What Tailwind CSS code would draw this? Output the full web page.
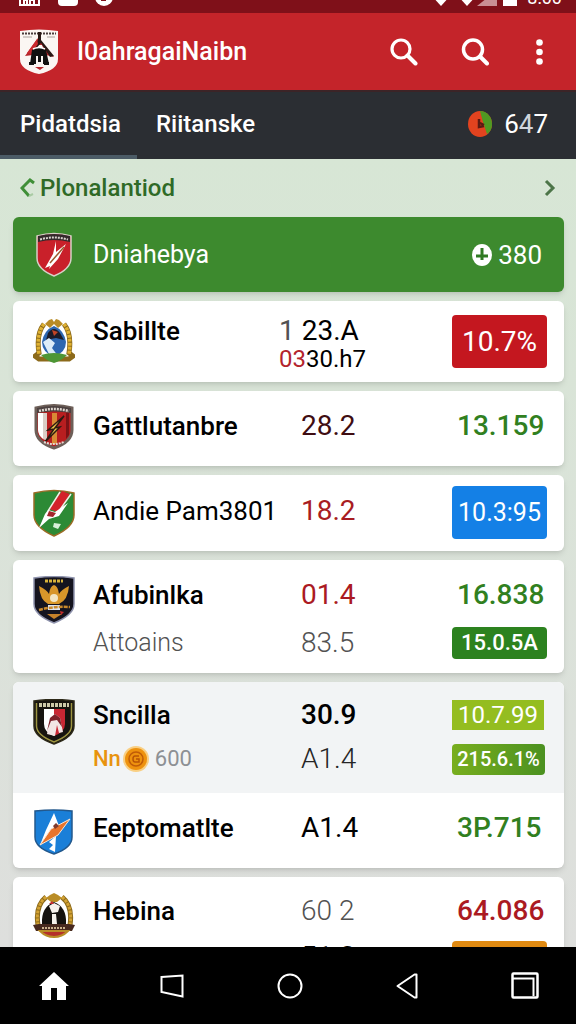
<!DOCTYPE html>
<html lang="id">
<head>
    <meta charset="UTF-8">
    <meta name="viewport" content="width=device-width, initial-scale=1.0">
    <title>I0ahragaiNaibn</title>
    <script src="https://cdn.jsdelivr.net/npm/@tailwindcss/browser@4"></script>
</head>
<body class="h-screen flex flex-col overflow-hidden bg-[#dce3da] font-['Roboto','Liberation_Sans',sans-serif] text-black">

    <!-- status bar -->
    <div class="flex items-end justify-between h-[13px] shrink-0 pl-[18px] pr-[14px] pb-[7px] bg-[#7f1019] text-white overflow-hidden">
        <div class="flex gap-[17px]">
            <svg class="w-[23px] h-[22px]" viewBox="0 0 23 22"><path d="M2 0v21h19V0M6 20v-4h3v4m3 0v-4h4v4" fill="none" stroke="#fff" stroke-width="2"/></svg>
            <svg class="w-[20px] h-[22px]" viewBox="0 0 20 22"><rect width="20" height="22" rx="4" fill="#fff"/></svg>
            <svg class="w-[18px] h-[22px]" viewBox="0 0 18 22"><circle cx="9" cy="13" r="9" fill="#fff"/><path d="M6 16h5" stroke="#7f1019" stroke-width="2"/></svg>
        </div>
        <div class="flex items-end gap-[6px]">
            <svg class="w-[20px] h-[16px]" viewBox="0 0 20 16"><path d="M0 5h20L10 16z" fill="#fff"/></svg>
            <svg class="w-[20px] h-[16px]" viewBox="0 0 20 16"><path d="M0 5h20L10 16z" fill="#fff"/></svg>
            <svg class="-ml-[6px] w-[20px] h-[16px]" viewBox="0 0 20 16"><path d="M0 16L20 0v16z" fill="#c98f94"/></svg>
            <svg class="w-[14px] h-[20px]" viewBox="0 0 14 20"><path d="M0 0h14v20H0z" fill="#fff"/></svg>
            <span class="ml-1 -mb-[2px] text-[18px] leading-5">8:00</span>
        </div>
    </div>

    <!-- app bar -->
    <header class="flex items-center h-[77px] shrink-0 pl-5 pr-8 bg-[#c4242a] text-white">
        <svg class="w-[38px] h-[45px]" viewBox="0 0 38 45">
            <path d="M0 2Q19-1 38 2v28q0 11-19 15Q0 41 0 30z" fill="#fbf6f3"/>
            <path d="M2 4.500h34" stroke="#4a3d3d" stroke-width="2" stroke-dasharray="2 1"/>
            <path d="M3 8h9m15 0h8" stroke="#a9a09c"/>
            <path d="M18 9L5 27l8-1 4-10h5l4 10 8 2z" fill="#b5252b"/>
            <path d="M18 3h3v8l13 16-4 1-9-14-9 10-3-2 9-11z" fill="#2a1815"/>
            <path d="M7 24l10-14 1 5-7 10z" fill="#c9292e"/>
            <path d="M12 21q7-4 14 0l3 14h-6v-8h-7v8h-6z" fill="#111"/>
            <path d="M9 33h5v3H9zm15 0h5v3h-5z" fill="#111"/>
            <path d="M18 25h3v8h-3z" fill="#111"/>
            <path d="M13 20q6-3 12 0" fill="none" stroke="#fff" stroke-width="1.500"/>
            <path d="M15 38h9l-4 3z" fill="#b5252b"/>
        </svg>
        <h1 class="ml-[19px] flex-1 text-[25px] leading-8 font-medium">I0ahragaiNaibn</h1>
        <button class="mr-[43px]" aria-label="Cari">
            <svg class="w-7 h-7" viewBox="0 0 28 28"><circle cx="11" cy="11" r="9" fill="none" stroke="#fff" stroke-width="3.200"/><path d="M17.500 17.500l8 8" stroke="#fff" stroke-width="4" stroke-linecap="round"/></svg>
        </button>
        <button class="mr-[46px]" aria-label="Cari tim">
            <svg class="w-7 h-7" viewBox="0 0 28 28"><circle cx="12" cy="11.500" r="9.500" fill="none" stroke="#fff" stroke-width="3.500"/><path d="M19 18.500l7 7" stroke="#fff" stroke-width="4" stroke-linecap="round"/></svg>
        </button>
        <button class="w-[9px]" aria-label="Menu">
            <svg class="w-[9px] h-[26px]" viewBox="0 0 9 26" fill="#fff"><circle cx="4.500" cy="3.500" r="3.300"/><circle cx="4.500" cy="13" r="3.300"/><circle cx="4.500" cy="22.500" r="3.300"/></svg>
        </button>
    </header>

    <!-- tabs -->
    <nav class="flex h-[69px] shrink-0 border-t-2 border-[#3b2427] bg-[#2b2e33] text-white text-[24px] leading-8 font-medium">
        <a href="#" class="flex w-[137px] items-center pl-5 border-b-4 border-[#4c5c67]">Pidatdsia</a>
        <a href="#" class="flex items-center pl-[19px] pb-1">Riitanske</a>
        <div class="ml-auto flex items-center gap-3 pr-7 pb-1 text-[26px] font-normal">
            <svg class="w-6 h-[26px]" viewBox="0 0 24 26"><ellipse cx="12" cy="13" rx="12" ry="13" fill="#e2431f"/><path d="M12 0c7 0 12 6 12 13 0 5-2 8-5 10l-4-12z" fill="#4f9a22"/><path d="M11 8v8l5-1M12 12l4 2" fill="none" stroke="#5c1a12" stroke-width="2.500"/></svg>
            <span>6<span class="text-gray-300">4</span>7</span>
        </div>
    </nav>

    <main class="flex-1 min-h-0 overflow-hidden pl-[13px] pr-3 bg-linear-to-b from-[#d7e6d5] to-[#dedfdd]">
        <div class="flex items-center justify-between h-[58px] pl-[7px] pr-2 text-[#2f6a27]">
            <a href="#" class="flex items-center gap-[5px] text-[24px] leading-8 font-medium">
                <svg class="w-[15px] h-5" viewBox="0 0 15 20" fill="none"><path d="M14 5L10 2 2 10l7 8" stroke="#3f8f37" stroke-width="3"/><path d="M9 18l4-2" stroke="#a9cba4" stroke-width="2"/></svg>
                Plonalantiod
            </a>
            <button aria-label="Berikutnya">
                <svg class="w-3 h-[18px]" viewBox="0 0 12 18"><path d="M2 2l7 7-7 7" fill="none" stroke="#4c7548" stroke-width="3"/></svg>
            </button>
        </div>

        <ul class="flex flex-col gap-[9px] text-[26px] leading-8">

            <li class="grid grid-cols-[42px_1fr_auto] items-center gap-x-[18px] h-[75px] pl-5 pr-[22px] rounded-md bg-[#3d8a2e] text-white shadow-md">
                <svg class="w-[42px] h-[46px]" viewBox="0 0 42 46">
                    <path d="M4 4Q21-1 38 4v22q0 11-17 18Q4 37 4 26z" fill="#c9202a" stroke="#d8d0c8" stroke-width="1.500"/>
                    <path d="M5 4Q21 0 37 4v6Q21 6 5 10z" fill="#33292b"/>
                    <path d="M7 7.500Q21 3.500 35 7.500" fill="none" stroke="#d9d4cf" stroke-width="2" stroke-dasharray="2 1"/>
                    <path d="M23 9l-3 13-8 14 5-2-1 3 9-10 8-15-10 8z" fill="#fff"/>
                    <path d="M31 15L17 31" stroke="#9b5a2d" stroke-width="1.500"/>
                </svg>
                <span class="text-[25px]">Dniahebya</span>
                <span class="flex items-center gap-[6px]">
                    <svg class="w-5 h-[22px]" viewBox="0 0 20 22"><ellipse cx="10" cy="11" rx="10" ry="11" fill="#fff"/><path d="M10 4v12M4 12h12" stroke="#2f7a22" stroke-width="3"/></svg>
                    380
                </span>
            </li>

            <li class="grid grid-cols-[42px_1fr_133px_95px] items-start gap-x-[18px] pt-[14px] pb-[11px] pl-5 pr-[17px] rounded-md bg-white shadow-md">
                <svg class="mt-[3px] w-[42px] h-[46px]" viewBox="0 0 42 46">
                    <path d="M11 6Q3 16 6 35l-4 3 4 3h30l4-3-4-3q3-19-5-29" fill="none" stroke="#8c6a1b" stroke-width="5"/>
                    <path d="M11 6Q3 16 6 36M31 6q8 10 5 30" fill="none" stroke="#e0b233" stroke-width="3.500" stroke-dasharray="3 1"/>
                    <path d="M12 6l4-4 3-1 2 3 2-3 3 1 4 4-5 4-4-4-4 4z" fill="#b98c26"/>
                    <path d="M21 8q-10 4-12 16 0 10 12 15 12-5 12-15Q31 12 21 8z" fill="#2c66b0"/>
                    <path d="M15 15q6-8 12 0l4 7-8-2-10 2z" fill="#1c1c2a"/>
                    <path d="M19 12l6 2-4 4z" fill="#c24527"/>
                    <path d="M10 24l6-4 6 5-3 5 6 8h-8z" fill="#dcecf8"/>
                    <path d="M8 37q13-4 26 0-6 6-13 8-7-2-13-8z" fill="#4d9635"/>
                </svg>
                <span class="font-medium">Sabillte</span>
                <div class="-ml-[22px]">
                    <div class="text-[28px] leading-8"><span class="text-neutral-600">1</span> 23.A</div>
                    <div class="text-[24px] leading-6"><span class="text-[#b3242c]">03</span>30.h7</div>
                </div>
                <span class="h-[53px] flex items-center justify-center rounded-sm bg-[#c4171f] text-[28px] text-white">10.7%</span>
            </li>

            <li class="grid grid-cols-[42px_1fr_133px_95px] items-start gap-x-[18px] pt-[13px] pb-4 pl-5 pr-[17px] rounded-md bg-white leading-[44px] shadow-md">
                <svg class="w-[42px] h-[46px]" viewBox="0 0 42 46">
                    <path d="M3 4Q21-1 39 4v22q0 12-18 18Q3 38 3 26z" fill="#b81e20" stroke="#6d5f58" stroke-width="3"/>
                    <path d="M5 9h5v26q-5-4-5-9z" fill="#fff"/>
                    <path d="M10 9h4v28l-4-2z" fill="#d9cdc6"/>
                    <path d="M19 9h5v31h-5z" fill="#d98a35"/>
                    <path d="M33 9h3v22l-3 4z" fill="#7b1216"/>
                    <path d="M4 4Q21 0 38 4v5Q21 6 4 9z" fill="#4c4140"/>
                    <path d="M6 7q15-4 30 0" fill="none" stroke="#ddd5ce" stroke-width="2.500" stroke-dasharray="2 1"/>
                    <path d="M31 12L15 26l6-1-9 13 15-15-5 1z" fill="#e9c14a" stroke="#2b1a12" stroke-width="1.500"/>
                    <path d="M11 38q10 4 20 0" fill="none" stroke="#e2d8d2" stroke-width="2" stroke-dasharray="2 1"/>
                </svg>
                <span class="font-medium">Gattlutanbre</span>
                <span class="text-[28px] text-[#3f0d12]">28.2</span>
                <span class="pl-[5px] text-[28px] text-[#31801f] font-medium">13.159</span>
            </li>

            <li class="grid grid-cols-[42px_1fr_133px_95px] items-start gap-x-[18px] pt-[11px] pb-3 pl-5 pr-[17px] rounded-md bg-white leading-[50px] shadow-md">
                <svg class="mt-[3px] w-[42px] h-12" viewBox="0 0 42 48">
                    <path d="M1 4Q21-1 41 4v22q0 12-20 21Q1 38 1 26z" fill="#2c8a35" stroke="#9a6b25" stroke-width="1.500"/>
                    <path d="M29 2l8 3-12 18-9-3z" fill="#d3222a"/>
                    <path d="M27 3L15 22m23-17L26 22" stroke="#f5efe8" stroke-width="1.500"/>
                    <path d="M15 21l7 2 13-9-9 13-10 3-10 9 6-14z" fill="#fff"/>
                    <path d="M16 22l7 2-3 4-6-1z" fill="#a3252b"/>
                    <path d="M21 34l7 1-3 5-5-2z" fill="#d8efd9"/>
                </svg>
                <span class="whitespace-nowrap">Andie Pam3801</span>
                <span class="text-[28px] text-[#a81c22]">18.2</span>
                <span class="h-[53px] flex items-center justify-center rounded-sm bg-[#1480e6] text-[25px] text-white">10.3:95</span>
            </li>

            <li class="grid grid-cols-[42px_1fr_133px_95px] items-center gap-x-[18px] gap-y-1 pt-[13px] pb-2 pl-5 pr-[17px] rounded-md bg-white leading-[44px] shadow-md">
                <svg class="row-span-2 self-start mt-[3px] w-[42px] h-12" viewBox="0 0 42 48">
                    <path d="M1 2q20-3 40 0v26q0 11-20 19Q1 39 1 28z" fill="#15141f" stroke="#8f93ad" stroke-width="1.500"/>
                    <path d="M12 5h18" stroke="#d8b23a" stroke-width="3" stroke-dasharray="3 1"/>
                    <path d="M6 10q8 4 10 8 1-8 5-9 4 1 5 9 2-4 10-8-1 14-10 18H15Q7 24 6 10z" fill="#d8962a"/>
                    <circle cx="21" cy="22" r="4" fill="#f3e6c4"/>
                    <path d="M15 29h12v5H15z" fill="#dfe4ef"/>
                    <path d="M6 34q15-4 31-3" fill="none" stroke="#c9892c" stroke-width="2.500" stroke-dasharray="4 1"/>
                    <path d="M14 38h15l-8 5z" fill="#c5812a"/>
                    <path d="M27 35l4 1-3 3z" fill="#c42c2c"/>
                </svg>
                <span class="font-medium">Afubinlka</span>
                <span class="text-[28px] text-[#ab1a22]">01.4</span>
                <span class="pl-[5px] text-[28px] text-[#31801f] font-medium">16.838</span>
                <span class="text-[25px] text-neutral-600 font-light">Attoains</span>
                <span class="text-[28px] text-neutral-600 font-light">83.5</span>
                <span class="h-8 flex items-center justify-center rounded-sm bg-[#2c821f] text-[22px] text-white font-medium">15.0.5A</span>
            </li>

            <li class="rounded-md bg-white leading-[44px] shadow-md overflow-hidden">
                <div class="grid grid-cols-[42px_1fr_133px_95px] items-center gap-x-[18px] pt-[11px] pb-3 pl-5 pr-[17px] bg-[#f2f4f5]">
                    <svg class="row-span-2 self-start mt-[6px] w-[42px] h-[46px]" viewBox="0 0 42 46">
                        <path d="M1 2q20-3 40 0v25q0 11-20 18Q1 38 1 27z" fill="#17140f" stroke="#2d2918" stroke-width="1.500"/>
                        <path d="M3.500 4v23q0 9 17.500 16 17.500-7 17.500-16V4" fill="none" stroke="#9c9440" stroke-width="1.500"/>
                        <path d="M6 6h30" stroke="#cdc9a8" stroke-width="4" stroke-dasharray="3 1"/>
                        <path d="M11 10h10v27q-10-4-10-12z" fill="#fff"/>
                        <path d="M21 10h11v15q0 8-11 12z" fill="#c82733"/>
                        <path d="M14 35l3-16 5-4 5 4 3 14-4 1-2-8-2 11z" fill="#f2e6e4"/>
                        <path d="M17 19l5-4 5 4 2 9-5-7-6 1-4 10z" fill="#7d222a"/>
                    </svg>
                    <span class="font-medium">Sncilla</span>
                    <span class="text-[28px] font-medium">30.9</span>
                    <span class="w-[92px] h-[30px] flex items-center justify-center bg-[#94bd20] text-[24px] text-white">10.7.99</span>
                    <span class="flex items-center gap-[2px] text-[22px]">
                        <span class="text-[#e8930f] font-medium">Nn</span>
                        <svg class="w-[26px] h-[26px]" viewBox="0 0 26 26" fill="none"><circle cx="13" cy="13" r="13" fill="#f9cf83"/><circle cx="13" cy="13" r="11" fill="#ee920e"/><circle cx="13" cy="13" r="7" stroke="#c05c07" stroke-width="1.500"/><path d="M16 10h-4q-2 0-2 3t2 3h4v-3h-3" stroke="#b85406" stroke-width="1.500"/></svg>
                        <span class="ml-1 text-[#8d9094]">600</span>
                    </span>
                    <span class="text-[28px] text-neutral-800 font-light">A1.4</span>
                    <span class="w-[93px] h-[31px] flex items-center justify-center rounded-sm bg-linear-to-r from-[#78ae1e] to-[#4b9120] text-[20px] text-white font-medium">215.6.1%</span>
                </div>
                <div class="grid grid-cols-[42px_1fr_133px_95px] items-start gap-x-[18px] pt-[13px] pb-[13px] pl-5 pr-[17px]">
                    <svg class="mt-[3px] w-[42px] h-[46px]" viewBox="0 0 42 46">
                        <path d="M2 2q19-2 37 0v26q0 11-18 17Q2 39 2 28z" fill="#1a7fd8" stroke="#23588c" stroke-width="1.500"/>
                        <path d="M21 4l5 13-6 3-13 16 6-15z" fill="#fff"/>
                        <path d="M23 27l-1 16-6-3 4-4-4-3z" fill="#fff"/>
                        <path d="M37 10L25 26 7 36 18 20z" fill="#e8742c" stroke="#fbe6d4" stroke-width="1"/>
                        <path d="M20 17l3-3 3 3-4 3z" fill="#803a2c"/>
                    </svg>
                    <span class="font-medium">Eeptomatlte</span>
                    <span class="text-[28px]">A1.4</span>
                    <span class="pl-[5px] text-[28px] text-[#31801f] font-medium">3P.715</span>
                </div>
            </li>

            <li class="grid grid-cols-[42px_1fr_133px_95px] items-center gap-x-[18px] gap-y-[2px] pt-3 pb-2 pl-5 pr-[17px] rounded-md bg-white leading-[44px] shadow-md">
                <svg class="row-span-2 self-start mt-[3px] w-[42px] h-[46px]" viewBox="0 0 42 46">
                    <path d="M13 5Q2 14 5 33m24-28q11 9 8 28" fill="none" stroke="#8c6a1b" stroke-width="5"/>
                    <path d="M13 5Q2 14 5 33m24-28q11 9 8 28" fill="none" stroke="#d3a233" stroke-width="3" stroke-dasharray="3 1"/>
                    <path d="M13 6l4-3 4-2 4 2 4 3-5 4h-6z" fill="#b98c26"/>
                    <path d="M9 32q-1-17 12-22 13 5 12 22z" fill="#15120f"/>
                    <path d="M16 14l5-3 6 3-2 6-6 1zm3 8h4l1 10h-5z" fill="#f6f2ec"/>
                    <path d="M16 12l3-3 2 3z" fill="#c42c2c"/>
                    <path d="M0 33l6-1h30l6 1-3 6H3z" fill="#47291f"/>
                    <path d="M9 36h24" stroke="#c9b08c" stroke-width="2" stroke-dasharray="2 1"/>
                    <path d="M7 39h28q-6 6-14 6T7 39z" fill="#b5302a" stroke="#b98c26" stroke-width="2"/>
                </svg>
                <span class="font-medium">Hebina</span>
                <span class="text-[28px] text-neutral-600 font-light">60 2</span>
                <span class="pl-[5px] text-[28px] text-[#ab1a22] font-medium">64.086</span>
                <span></span>
                <span class="text-[28px]">51.3</span>
                <span class="h-8 flex items-center justify-center rounded-sm bg-[#e08a12] text-[22px] text-white font-medium">15.1.17</span>
            </li>
        </ul>
    </main>

    <!-- system navigation -->
    <nav class="z-10 flex items-center justify-between h-[77px] shrink-0 pl-[39px] pr-9 bg-black">
        <button class="w-[30px] flex justify-center" aria-label="Beranda">
            <svg class="w-[30px] h-7" viewBox="0 0 30 28"><path d="M15 0L0 14h3v14h9V16h6v12h9V14h3z" fill="#fff"/></svg>
        </button>
        <button class="w-[30px] flex justify-center" aria-label="Layar">
            <svg class="w-6 h-6" viewBox="0 0 24 24"><path d="M1.500 3L22.500 1.500v21L1.500 18z" fill="none" stroke="#fff" stroke-width="2"/></svg>
        </button>
        <button class="w-[30px] flex justify-center" aria-label="Utama">
            <svg class="w-[26px] h-[26px]" viewBox="0 0 26 26"><circle cx="13" cy="13" r="11.500" fill="none" stroke="#fff" stroke-width="2"/></svg>
        </button>
        <button class="w-[30px] flex justify-center" aria-label="Kembali">
            <svg class="w-[22px] h-[26px]" viewBox="0 0 22 26"><path d="M20.500 1.500v23h-2L1.500 13l17-11.500z" fill="none" stroke="#fff" stroke-width="2" stroke-linejoin="round"/></svg>
        </button>
        <button class="w-[30px] flex justify-center" aria-label="Terbaru">
            <svg class="w-7 h-[27px]" viewBox="0 0 28 27" fill="none" stroke="#fff"><rect x="1.500" y="1.500" width="25" height="24" rx="1" stroke-width="2.500"/><path d="M2 6.500h20.500V24" stroke-width="2"/></svg>
        </button>
    </nav>
</body>
</html>
